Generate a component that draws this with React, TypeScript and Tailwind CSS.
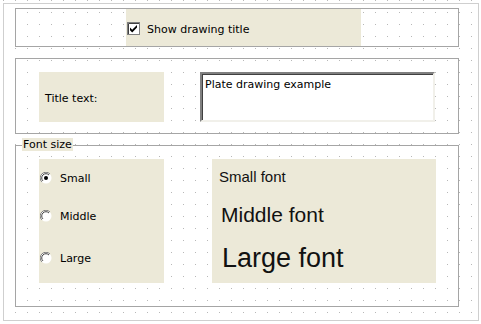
import React from 'react'

// classic XP-style checkbox (checked)
function CheckBox() {
  return (
    <svg width="13" height="13" viewBox="0 0 13 13" className="shrink-0">
      <rect x="0.5" y="0.5" width="12" height="12" fill="#fff" stroke="#7f7f7f" />
      <path d="M1.5 12V1.5H12" fill="none" stroke="#404040" />
      <path d="M3 5.5 L5.2 7.8 L10 3 L10 5.6 L5.2 10.4 L3 8.2 Z" fill="#000" />
    </svg>
  )
}

function Radio({ checked }: { checked?: boolean }) {
  return (
    <svg width="12" height="12" viewBox="0 0 12 12" className="shrink-0">
      <circle cx="6" cy="6" r="5.5" fill="#fff" />
      <path d="M10 2 A5.5 5.5 0 0 0 1.8 9.9" fill="none" stroke="#808080" strokeWidth="1" />
      <path d="M9 3 A4.2 4.2 0 0 0 2.9 8.9" fill="none" stroke="#404040" strokeWidth="1" />
      {checked && <circle cx="6" cy="6" r="2" fill="#000" />}
    </svg>
  )
}

const label = "font-['DejaVu_Sans',sans-serif] text-[11px] text-black leading-none"

export default function App() {
  return (
    <div className="w-[481px] h-[324px] bg-white bg-[radial-gradient(circle_at_0.5px_0.5px,#b8b8b8_0.6px,transparent_0.9px)] bg-[size:12px_12px] bg-[position:3px_0px] p-[3px]">
      <div className="w-[476px] h-[318px] border border-[#cfcfcf] pt-[4px] pl-[11px]">
        {/* show drawing title */}
        <div className="w-[444px] h-[39px] border border-[#a5a5a5] flex">
          <div className="ml-[110px] w-[235px] h-full bg-[#ece9d8] flex items-center pl-[1px] pt-[1px]">
            <CheckBox />
            <span className={`${label} ml-[7px] mt-[3px]`}>Show drawing title</span>
          </div>
        </div>

        {/* title text */}
        <div className="mt-[11px] w-[444px] h-[76px] border border-[#a5a5a5] flex pt-[13px] pl-[23px]">
          <div className="w-[125px] h-[50px] bg-[#ece9d8] flex items-center pl-[6px] pt-[3px]">
            <span className={label}>Title text:</span>
          </div>
          <div className={`${label} ml-[36px] w-[235px] h-[50px] bg-white border-2 border-t-[#808080] border-l-[#808080] border-r-[#f1f0ea] border-b-[#f1f0ea] shadow-[inset_1px_1px_0_#404040] pl-[3px] pt-[5px]`}>
            Plate drawing example
          </div>
        </div>

        {/* font size group */}
        <div className="relative mt-[11px] w-[444px] h-[162px] border border-[#a5a5a5] flex pt-[13px] pl-[23px]">
          <div className="absolute left-[6px] top-[-8px] bg-[#ece9d8] px-[1px] h-[13px] flex items-center">
            <span className={label}>Font size</span>
          </div>
          <div className="w-[125px] h-[124px] bg-[#ece9d8] flex flex-col pl-[1px]">
            <div className="flex items-center h-[12px] mt-[13px]">
              <Radio checked />
              <span className={`${label} ml-[8px]`}>Small</span>
            </div>
            <div className="flex items-center h-[12px] mt-[26px]">
              <Radio />
              <span className={`${label} ml-[8px]`}>Middle</span>
            </div>
            <div className="flex items-center h-[12px] mt-[30px]">
              <Radio />
              <span className={`${label} ml-[8px]`}>Large</span>
            </div>
          </div>
          <div className="ml-[48px] w-[224px] h-[124px] bg-[#ece9d8] flex flex-col font-['Liberation_Sans',Arial,sans-serif] text-[#111] leading-none">
            <span className="text-[15px] ml-[7px] mt-[10px]">Small font</span>
            <span className="text-[21px] ml-[9px] mt-[20px]">Middle font</span>
            <span className="text-[27px] ml-[10px] mt-[20px]">Large font</span>
          </div>
        </div>
      </div>
    </div>
  )
}
